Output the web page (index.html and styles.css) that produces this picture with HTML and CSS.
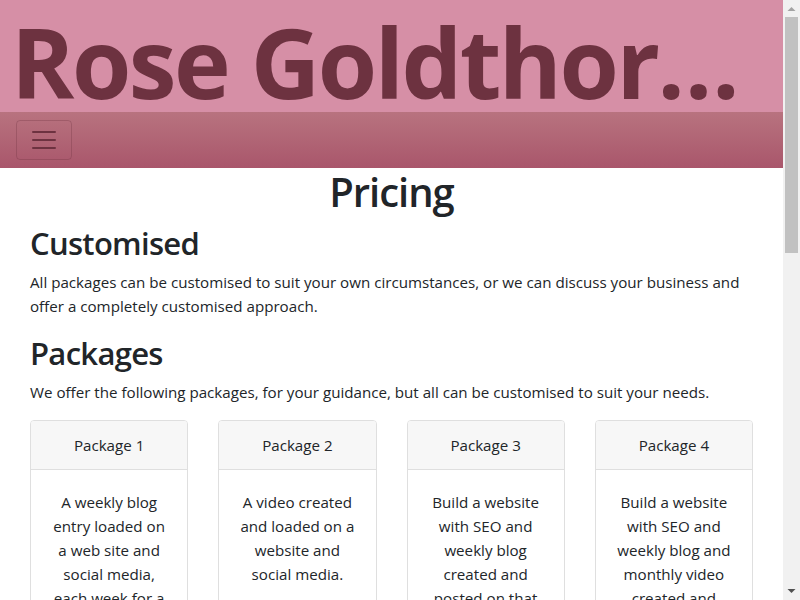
FILE: index.html
```html
<!DOCTYPE html>
<html lang="en">
<head>
<meta charset="utf-8">
<title>Pricing - Rose Goldthorpe</title>
<link rel="stylesheet" href="styles.css">
</head>
<body>
<div class="page">
  <header class="site-header">
    <div class="brand">Rose Goldthorpe Marketing</div>
  </header>
  <nav class="navbar">
    <button class="toggler" type="button" aria-label="Toggle navigation">
      <svg width="30" height="30" viewBox="0 0 30 30"><path d="M4 7h22M4 15h22M4 23h22" stroke="#6d3240" stroke-width="2" stroke-linecap="round"/></svg>
    </button>
  </nav>
  <main class="container">
    <h1 class="page-title">Pricing</h1>
    <h2>Customised</h2>
    <p>All packages can be customised to suit your own circumstances, or we can discuss your business and offer a completely customised approach.</p>
    <h2>Packages</h2>
    <p>We offer the following packages, for your guidance, but all can be customised to suit your needs.</p>
    <div class="cards">
      <div class="card">
        <div class="card-header">Package 1</div>
        <div class="card-body">A weekly blog entry loaded on a web site and social media, each week for a month.</div>
      </div>
      <div class="card">
        <div class="card-header">Package 2</div>
        <div class="card-body">A video created and loaded on a website and social media.</div>
      </div>
      <div class="card">
        <div class="card-header">Package 3</div>
        <div class="card-body">Build a website with SEO and weekly blog created and posted on that website and social media.</div>
      </div>
      <div class="card">
        <div class="card-header">Package 4</div>
        <div class="card-body">Build a website with SEO and weekly blog and monthly video created and posted on that website and social media.</div>
      </div>
    </div>
  </main>
</div>
<div class="scrollbar" aria-hidden="true">
  <div class="sb-btn"><svg width="17" height="17" viewBox="0 0 17 17"><path d="M4.5 11h8l-4-4z" fill="#a3a3a3"/></svg></div>
  <div class="sb-track"><div class="sb-thumb"></div></div>
  <div class="sb-btn"><svg width="17" height="17" viewBox="0 0 17 17"><path d="M4.5 6h8l-4 4z" fill="#505050"/></svg></div>
</div>
</body>
</html>
```
FILE: styles.css
```css
* { box-sizing: border-box; }
html, body { margin: 0; padding: 0; }
body {
  font-family: "Open Sans", "Noto Sans", "Liberation Sans", sans-serif;
  font-size: 15.15px;
  line-height: 24px;
  color: #212529;
  background: #fff;
  display: flex;
  align-items: flex-start;
}
.page {
  flex: 1;
  min-width: 0;
  padding-bottom: 740px;
}
.scrollbar {
  position: sticky;
  top: 0;
  width: 17px;
  height: 100vh;
  flex: none;
  background: #f1f1f1;
  display: flex;
  flex-direction: column;
}
.sb-btn {
  height: 17px;
  flex: none;
  display: flex;
}
.sb-track {
  flex: 1;
  padding: 0 2px;
}
.sb-thumb {
  height: 236px;
  background: #c1c1c1;
}
.site-header {
  background: #d68fa6;
  height: 112px;
  padding: 6px 27px 0 11px;
  overflow: hidden;
}
.brand {
  font-size: 96px;
  font-weight: 700;
  line-height: 112px;
  color: #6d3240;
  white-space: nowrap;
  overflow: hidden;
  text-overflow: ellipsis;
  letter-spacing: -2.5px;
}
.navbar {
  height: 56px;
  padding: 8px 16px;
  background: linear-gradient(to bottom, #b8737f, #a9566b);
  display: flex;
  align-items: center;
}
.toggler {
  width: 56px;
  height: 40px;
  padding: 4px 12px;
  background: transparent;
  border: 1px solid rgba(109, 50, 64, 0.3);
  border-radius: 4px;
  display: flex;
  align-items: center;
  justify-content: center;
}
.container {
  padding: 0 30px;
}
.page-title {
  font-size: 40px;
  font-weight: 600;
  line-height: 48px;
  margin: 0 0 8px;
  text-align: center;
  letter-spacing: -1px;
}
h2 {
  font-size: 31px;
  font-weight: 600;
  line-height: 38px;
  margin: 0 0 8px;
  letter-spacing: -0.7px;
}
p {
  margin: 0 0 16px;
}
.cards {
  display: grid;
  grid-template-columns: repeat(4, 1fr);
  gap: 30px;
}
.card {
  border: 1px solid #dfdfdf;
  border-radius: 4px;
  text-align: center;
  overflow: hidden;
}
.card-header {
  background: #f7f7f7;
  border-bottom: 1px solid #dfdfdf;
  padding: 12px 20px;
}
.card-body {
  padding: 20px;
}
```
